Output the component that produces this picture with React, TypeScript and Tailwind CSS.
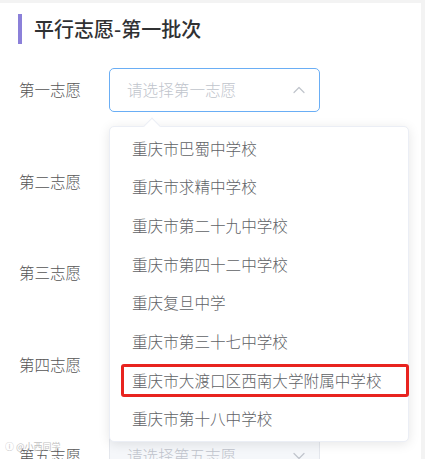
const schools = [
  "重庆市巴蜀中学校",
  "重庆市求精中学校",
  "重庆市第二十九中学校",
  "重庆市第四十二中学校",
  "重庆复旦中学",
  "重庆市第三十七中学校",
  "重庆市大渡口区西南大学附属中学校",
  "重庆市第十八中学校",
];

const choices = ["第一志愿", "第二志愿", "第三志愿", "第四志愿", "第五志愿"];

function Chevron({ up }: { up?: boolean }) {
  return (
    <svg width="12" height="8" viewBox="0 0 12 8" fill="none" className={up ? "" : "rotate-180"}>
      <path d="M1 6.5 6 1.5l5 5" stroke="#c0c4cc" strokeWidth="1.2" strokeLinecap="round" strokeLinejoin="round" />
    </svg>
  );
}

export default function App() {
  return (
    <div
      className="h-[459px] w-[425px] overflow-hidden bg-[#f3f3f3] pt-[3px] pr-[4px]"
      style={{ fontFamily: '"Noto Sans CJK SC", "Noto Sans", sans-serif' }}
    >
      <div className="relative h-full bg-white">
        {/* Header */}
        <div className="flex items-center pl-[18px] pt-[11px]">
          <div className="h-[30px] w-[4px] bg-[#8b80d9]" />
          <h1 className="ml-[12px] text-[20px] font-medium leading-[30px] text-[#303133]">平行志愿-第一批次</h1>
        </div>

        {/* Form */}
        <div className="mt-[24px] flex flex-col gap-[47.5px]">
          {choices.map((c, i) => (
            <div key={c} className="flex items-center pl-[19px]">
              <span className="w-[90px] text-[15.5px] font-light text-[#555]">{c}</span>
              <div className="relative">
                <div
                  className={
                    i === 0
                      ? "flex h-[44px] w-[211px] items-center justify-between rounded-[5px] border border-[#6aaef5] bg-white pl-[17px] pr-[14px]"
                      : "flex h-[44px] w-[211px] items-center justify-between rounded-[5px] border border-[#e4e7ed] bg-[#f5f7fa] pl-[17px] pr-[14px]"
                  }
                >
                  <span className="text-[15.6px] font-light text-[#c0c4cc]">请选择{c}</span>
                  <Chevron up={i === 0} />
                </div>

                {i === 0 && (
                  <div className="absolute left-0 top-[58px] z-10 w-[300px] rounded-[5px] border border-[#ebeef5] bg-white py-[2px] shadow-[0_2px_12px_rgba(0,0,0,0.1)]">
                    <div className="absolute -top-[7px] left-[36px] h-[12px] w-[12px] rotate-45 border-l border-t border-[#ebeef5] bg-white" />
                    {schools.map((s, j) => (
                      <div key={s} className="relative flex h-[38.7px] items-center pl-[22px] text-[15.6px] font-light text-[#606266]">
                        {j === 6 && (
                          <div className="absolute left-[11px] top-[3px] h-[33px] w-[288px] rounded-[3px] border-[3px] border-[#e8231f]" />
                        )}
                        <span className="relative">{s}</span>
                      </div>
                    ))}
                  </div>
                )}
              </div>
            </div>
          ))}
        </div>

        {/* watermark */}
        <div className="absolute left-[5px] top-[437px] z-20 flex items-center gap-[2px] text-[9px] text-[#bbb] opacity-90">
          <span>ⓘ</span>
          <span>@小西同学</span>
        </div>
      </div>
    </div>
  );
}
